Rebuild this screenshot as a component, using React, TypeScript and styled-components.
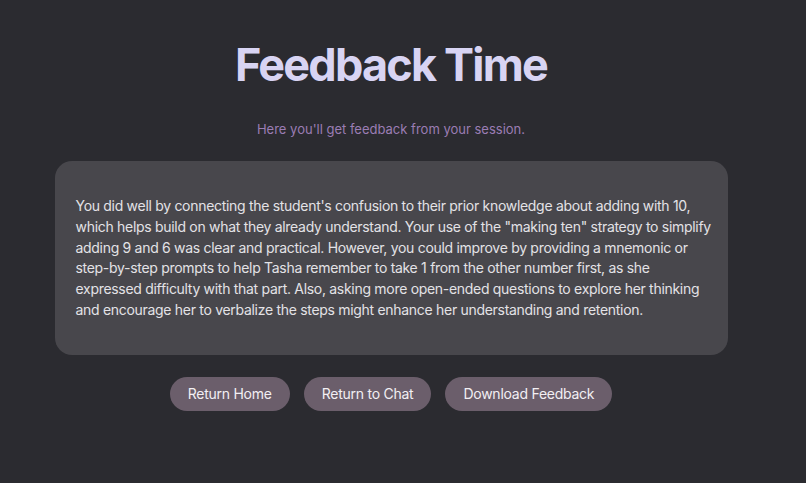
import React from "react";
import styled, { createGlobalStyle } from "styled-components";

const Global = createGlobalStyle`
  html, body { margin: 0; padding: 0; background: #2b2b30; }
  body { font-family: Inter, "Noto Sans", sans-serif; -webkit-font-smoothing: antialiased; }
`;

const Page = styled.main`
  width: 782px;
  min-height: 483px;
  display: flex;
  flex-direction: column;
  align-items: center;
  padding-top: 36px;
  box-sizing: border-box;
`;

const Title = styled.h1`
  margin: 0;
  font-size: 45px;
  line-height: 58px;
  font-weight: 700;
  color: #d8d4f3;
  letter-spacing: -1.8px;
`;

const Subtitle = styled.p`
  margin: 26px 0 0;
  font-size: 13px;
  line-height: 18px;
  color: #9b7db4;
`;

const Card = styled.section`
  margin-top: 23px;
  width: 673px;
  box-sizing: border-box;
  background: #48474c;
  border-radius: 17px;
  padding: 35px 21px 34px;
`;

const Body = styled.p`
  margin: 0;
  font-size: 14px;
  line-height: 20.8px;
  letter-spacing: -0.3px;
  white-space: nowrap;
  color: #e3e2e6;
`;

const Actions = styled.div`
  display: flex;
  gap: 14px;
  margin-top: 22px;
`;

const Button = styled.button`
  height: 34px;
  padding: 0 18px;
  border: none;
  border-radius: 17px;
  background: #6b5e6b;
  color: #f2eff3;
  font-family: Inter, "Noto Sans", sans-serif;
  font-size: 14px;
  letter-spacing: -0.25px;
  cursor: pointer;
`;

const lines = [
  "You did well by connecting the student's confusion to their prior knowledge about adding with 10,",
  'which helps build on what they already understand. Your use of the "making ten" strategy to simplify',
  "adding 9 and 6 was clear and practical. However, you could improve by providing a mnemonic or",
  "step-by-step prompts to help Tasha remember to take 1 from the other number first, as she",
  "expressed difficulty with that part. Also, asking more open-ended questions to explore her thinking",
  "and encourage her to verbalize the steps might enhance her understanding and retention.",
];

export default function App() {
  return (
    <>
      <Global />
      <Page>
        <Title>Feedback Time</Title>
        <Subtitle>Here you'll get feedback from your session.</Subtitle>
        <Card>
          <Body>
            {lines.map((l, i) => (
              <React.Fragment key={i}>
                {l}
                {i < lines.length - 1 && <br />}
              </React.Fragment>
            ))}
          </Body>
        </Card>
        <Actions>
          <Button>Return Home</Button>
          <Button>Return to Chat</Button>
          <Button>Download Feedback</Button>
        </Actions>
      </Page>
    </>
  );
}
